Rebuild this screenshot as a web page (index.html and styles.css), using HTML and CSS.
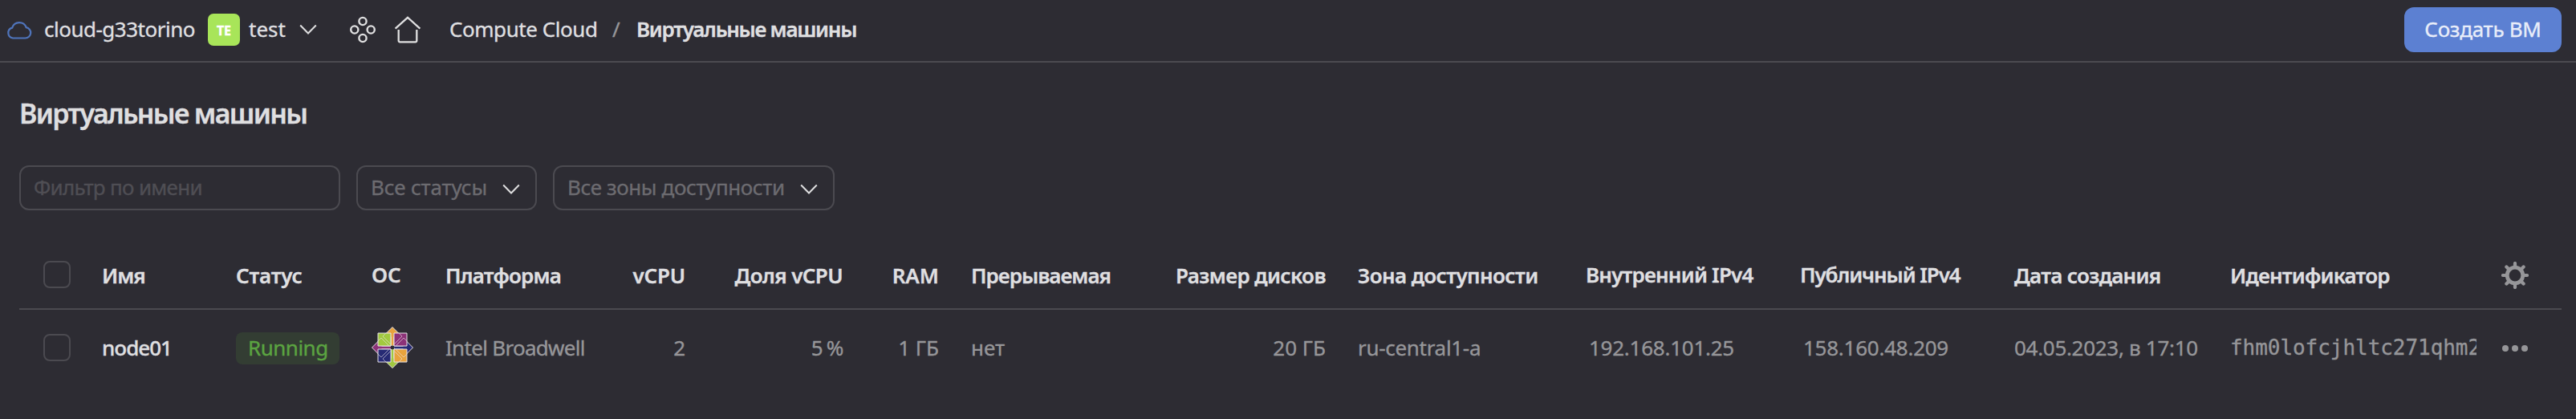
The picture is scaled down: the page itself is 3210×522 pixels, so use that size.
FILE: index.html
```html
<!DOCTYPE html>
<html lang="ru">
<head>
<meta charset="utf-8">
<title>Виртуальные машины</title>
<link rel="stylesheet" href="styles.css">
</head>
<body>
<header class="topbar">
  <svg class="cloud-icon" viewBox="0 0 32 24" width="32" height="24"><path d="M8 22.5h15.5a6.7 6.7 0 0 0 1.2-13.3A9.2 9.2 0 0 0 7.2 9.6 6.6 6.6 0 0 0 8 22.5z"/></svg>
  <span class="text cloud-name">cloud-g33torino</span>
  <span class="avatar">TE</span>
  <span class="text folder-name">test</span>
  <svg class="chevron folder-chevron" viewBox="0 0 22 14" width="22" height="14"><path d="M1.2 1.5 11 11.5 20.8 1.5"/></svg>
  <svg class="nav-icon services-icon" viewBox="0 0 32 34" width="32" height="34"><circle cx="16" cy="6.5" r="4.6"/><circle cx="5.8" cy="17" r="4.6"/><circle cx="26.2" cy="17" r="4.6"/><circle cx="16" cy="27.5" r="4.6"/></svg>
  <svg class="nav-icon home-icon" viewBox="0 0 34 34" width="34" height="34"><path d="M1.6 15.6 17 1.8l15.4 13.8M5.7 17v13.8a1.6 1.6 0 0 0 1.6 1.6h19.4a1.6 1.6 0 0 0 1.6-1.6V17"/></svg>
  <nav class="crumbs">
    <span class="text crumb">Compute Cloud</span>
    <span class="text slash">/</span>
    <span class="text crumb-current">Виртуальные машины</span>
  </nav>
  <button class="create">Создать ВМ</button>
</header>
<main class="page">
  <h1 class="title">Виртуальные машины</h1>
  <div class="filters">
    <div class="field name-filter">Фильтр по имени</div>
    <div class="field select status-filter"><span>Все статусы</span><svg class="chevron" viewBox="0 0 22 14" width="22" height="14"><path d="M1.2 1.5 11 11.5 20.8 1.5"/></svg></div>
    <div class="field select zone-filter"><span>Все зоны доступности</span><svg class="chevron" viewBox="0 0 22 14" width="22" height="14"><path d="M1.2 1.5 11 11.5 20.8 1.5"/></svg></div>
  </div>
  <section class="table">
    <div class="row head">
      <div class="check-cell"><span class="checkbox"></span></div>
      <div class="ls-10">Имя</div>
      <div class="ls-2">Статус</div>
      <div class="raised os-head">ОС</div>
      <div class="ls-8">Платформа</div>
      <div class="num ls-2">vCPU</div>
      <div class="num ls-6">Доля vCPU</div>
      <div class="num">RAM</div>
      <div class="indent ls-10">Прерываемая</div>
      <div class="num ls-6">Размер дисков</div>
      <div class="indent ls-6">Зона доступности</div>
      <div class="raised ls-8">Внутренний IPv4</div>
      <div class="raised ls-11">Публичный IPv4</div>
      <div class="ls-7">Дата создания</div>
      <div class="ls-8">Идентификатор</div>
      <div class="action"><svg class="gear" viewBox="-17 -17 34 34" width="34" height="34"><circle r="9.8"/><path d="M0-11v-4M0 11v4M-11 0h-4M11 0h4M-7.6-7.6l-3-3M7.6-7.6l3-3M-7.6 7.6l-3 3M7.6 7.6l3 3"/></svg></div>
    </div>
    <div class="row body">
      <div class="check-cell"><span class="checkbox"></span></div>
      <div class="vm-name">node01</div>
      <div><span class="badge">Running</span></div>
      <div class="os">
        <svg viewBox="-26 -26 52 52" width="52" height="52">
          <g class="os-shape">
            <path fill="#e8a33d" d="M0-25.5 12-13.5H2V0h-4v-13.5h-10z"/>
            <path fill="#262a74" d="M25.5 0 13.5 12V2H0v-4h13.5v-10z"/>
            <path fill="#a2c93f" d="M0 25.5-12 13.5h10V0h4v13.5h10z"/>
            <path fill="#8c3278" d="M-25.5 0-13.5-12v10H0v4h-13.5v10z"/>
            <path fill="#a2c93f" d="M-18-18h16v16h-16z"/>
            <path fill="#8c3278" d="M2-18h16v16H2z"/>
            <path fill="#262a74" d="M-18 2h16v16h-16z"/>
            <path fill="#e8a33d" d="M2 2h16v16H2z"/>
          </g>
          <path class="os-lines" d="M-7.5-18.5-12-14-2.5-4.5M7.5-18.5 12-14 2.5-4.5M-7.5 18.5-12 14-2.5 4.5M7.5 18.5 12 14 2.5 4.5M-18.5-7.5-14-12-4.5-2.5M-18.5 7.5-14 12-4.5 2.5M18.5-7.5 14-12 4.5-2.5M18.5 7.5 14 12 4.5 2.5"/>
          <circle r="2.4" fill="#2d2c33"/>
        </svg>
      </div>
      <div class="ls-7">Intel Broadwell</div>
      <div class="num">2</div>
      <div class="num ls-13">5 %</div>
      <div class="num">1 ГБ</div>
      <div class="indent">нет</div>
      <div class="num">20 ГБ</div>
      <div class="indent ls-3">ru-central1-a</div>
      <div class="ip">192.168.101.25</div>
      <div class="ip">158.160.48.209</div>
      <div class="ls-3">04.05.2023, в 17:10</div>
      <div class="id">fhm0lofcjhltc271qhm2</div>
      <div class="action"><svg class="dots" viewBox="0 0 32 8" width="32" height="8"><circle cx="4" cy="4" r="4"/><circle cx="16" cy="4" r="4"/><circle cx="28" cy="4" r="4"/></svg></div>
    </div>
  </section>
</main>
</body>
</html>
```
FILE: styles.css
```css
* { box-sizing: border-box; }
body {
  margin: 0;
  min-height: 522px;
  background: #2d2c33;
  color: #dfdfe0;
  font: 400 26px/40px "Noto Sans", "Open Sans", sans-serif;
  -webkit-text-stroke: 0.35px currentColor;
  white-space: nowrap;
}
svg { display: block; fill: none; flex: none; }

.topbar {
  display: flex;
  align-items: center;
  height: 78px;
  padding: 0 18px 2px 8px;
  border-bottom: 2px solid #4b4a50;
}
.topbar > *, .crumbs > * { flex: none; }
.text { padding-bottom: 2px; }
.cloud-icon { stroke: #4f74bb; stroke-width: 2.2; }
.cloud-name { width: 204px; margin-left: 15px; letter-spacing: -0.5px; }
.avatar {
  width: 40px;
  height: 40px;
  border-radius: 7px;
  background: #a8e559;
  color: #fff;
  font-size: 16px;
  font-weight: 700;
  line-height: 42px;
  text-align: center;
}
.folder-name { width: 63px; margin-left: 11px; }
.chevron { stroke: #dfdfe0; stroke-width: 2; }
.nav-icon { stroke: #dfdfe0; stroke-width: 2.4; }
.services-icon { margin-left: 41px; }
.home-icon { margin-left: 23px; stroke-width: 2.3; }
.crumbs { display: flex; margin-left: 35px; }
.crumb { width: 203px; letter-spacing: -0.45px; }
.slash { width: 30px; color: #969699; }
.crumb-current { font-weight: 600; letter-spacing: -1.3px; }
.create {
  width: 196px;
  height: 56px;
  margin-left: auto;
  padding: 0 0 2px;
  border: 0;
  border-radius: 12px;
  background: #5c80d2;
  color: #e8edf9;
  font: inherit;
  letter-spacing: -0.3px;
}

.page { padding: 40px 18px 0 24px; }
.title {
  margin: 0 0 42px;
  font-size: 34px;
  font-weight: 600;
  line-height: 46px;
  letter-spacing: -1.7px;
}
.filters { display: flex; gap: 20px; margin-bottom: 40px; }
.field {
  height: 56px;
  padding: 5px 16px 0;
  border: 2px solid #4b4a50;
  border-radius: 12px;
  color: #6c6b70;
}
.name-filter { width: 400px; color: #4f4e54; letter-spacing: -0.7px; }
.select { display: flex; justify-content: space-between; }
.select .chevron { margin-top: 16px; }
.status-filter { width: 225px; padding-right: 19px; letter-spacing: -0.15px; }
.zone-filter { width: 351px; padding-right: 19px; letter-spacing: -0.4px; }

.row {
  display: grid;
  grid-template-columns: 103px 167px 169px 92px 224px 75px 196px 120px 260px 222px 324px 267px 267px 269px 307px 106px;
  align-items: center;
}
.head { height: 84px; border-bottom: 2px solid #4b4a50; font-weight: 600; }
.body { height: 94px; color: #969699; }
.check-cell { padding-left: 30px; }
.checkbox { display: block; width: 34px; height: 34px; border: 2px solid #4b4a50; border-radius: 8px; }
.head .checkbox { margin-bottom: 2px; }
.num { text-align: right; }
.indent { padding-left: 40px; }
.raised { padding-bottom: 2px; }
.ip { padding-left: 4px; letter-spacing: -0.25px; }
.vm-name { color: #dfdfe0; font-weight: 500; letter-spacing: -1px; }
.badge {
  display: inline-block;
  width: 129px;
  height: 40px;
  margin-top: 2px;
  padding-left: 15px;
  border-radius: 8px;
  background: #333d33;
  color: #5ba441;
  line-height: 38px;
  letter-spacing: -0.5px;
}
.os-shape { stroke: #e9e4ea; stroke-width: 1; }
.os-lines { stroke: #e9e4ea; stroke-opacity: 0.6; }
.id { overflow: hidden; font-family: "DejaVu Sans Mono", monospace; letter-spacing: -0.05px; }
.action { padding-left: 31px; }
.gear { stroke: #969699; stroke-width: 4.8; }
.gear path { stroke-width: 4.2; stroke-linecap: round; }
.dots { margin: 2px 0 0 1px; fill: #969699; }

.ls-2 { letter-spacing: -0.2px; }
.ls-3 { letter-spacing: -0.3px; }
.ls-6 { letter-spacing: -0.6px; }
.ls-7 { letter-spacing: -0.7px; }
.ls-8 { letter-spacing: -0.8px; }
.ls-10 { letter-spacing: -1px; }
.ls-11 { letter-spacing: -1.1px; }
.ls-13 { letter-spacing: -1.3px; }
```
